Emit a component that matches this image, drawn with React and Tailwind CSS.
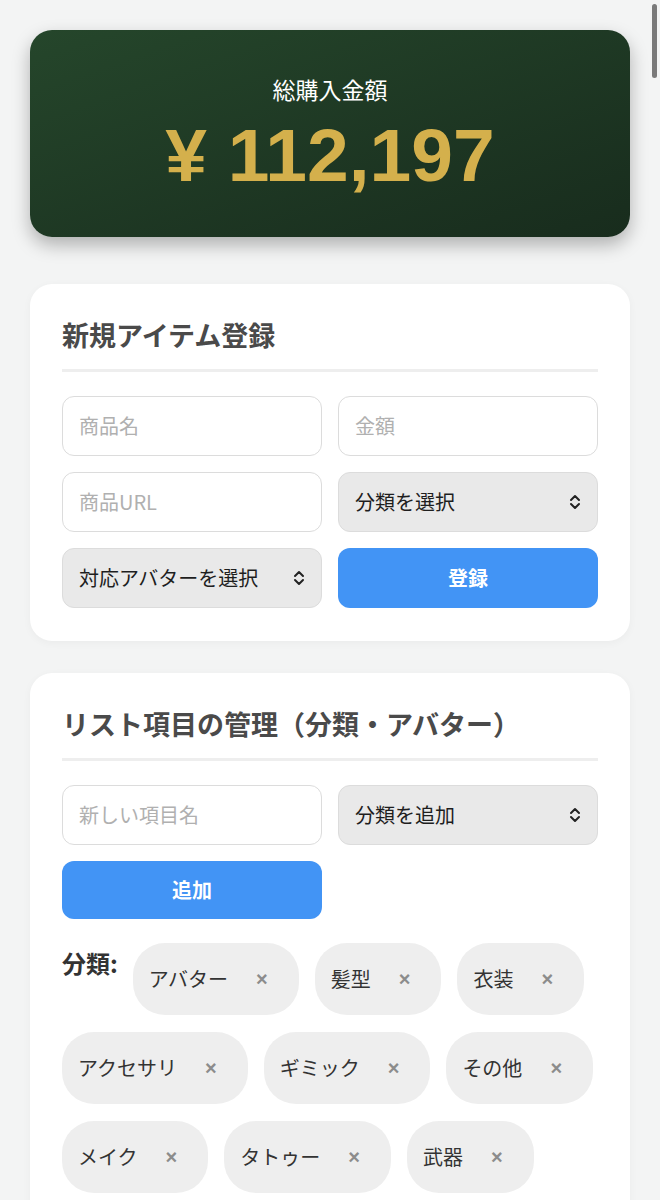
const jp = { fontFamily: '"Noto Sans CJK JP", "Noto Sans", sans-serif' };

const categories = [
  "アバター",
  "髪型",
  "衣装",
  "アクセサリ",
  "ギミック",
  "その他",
  "メイク",
  "タトゥー",
  "武器",
];

function UpDown() {
  return (
    <svg width="12" height="18" viewBox="0 0 12 18" fill="none">
      <path
        d="M2 7l4-4 4 4M2 11l4 4 4-4"
        stroke="#222"
        strokeWidth="2"
        strokeLinecap="round"
        strokeLinejoin="round"
      />
    </svg>
  );
}

function Field({ placeholder }) {
  return (
    <div className="flex h-[60px] items-center rounded-xl border-[1.5px] border-[#dcdcdc] bg-white px-4 text-[20px] text-[#b0b0b0]">
      {placeholder}
    </div>
  );
}

function Select({ label }) {
  return (
    <div className="flex h-[60px] items-center justify-between rounded-xl border-[1.5px] border-[#dcdcdc] bg-[#e9e9e9] pl-4 pr-[16px] text-[20px] text-[#1e1e1e]">
      <span>{label}</span>
      <UpDown />
    </div>
  );
}

function BlueButton({ children, className = "" }) {
  return (
    <button
      type="button"
      className={`flex items-center justify-center rounded-xl bg-[#4294f5] text-[20px] font-bold text-white ${className}`}
    >
      {children}
    </button>
  );
}

function Chip({ name }) {
  return (
    <div className="flex h-[72px] items-center rounded-[32px] bg-[#eeeeee] pl-4 pr-[17px] text-[20px] text-[#333]">
      <span>{name}</span>
      <span
        className="ml-[14px] px-[14px] text-[20px] font-bold leading-none text-[#8c8c8c]"
        style={{ fontFamily: '"Liberation Sans", sans-serif' }}
      >
        ×
      </span>
    </div>
  );
}

function CardTitle({ children }) {
  return (
    <div className="mb-6 border-b-[3px] border-[#eeeeee] pb-4">
      <h2 className="text-[27px] font-bold leading-[37px] text-[#4a4a4a]">
        {children}
      </h2>
    </div>
  );
}

export default function App() {
  return (
    <div
      className="relative min-h-[1200px] bg-[#f3f4f4] px-[30px] pt-[30px]"
      style={jp}
    >
      <div className="absolute right-[3px] top-[4px] h-[74px] w-[5px] rounded-full bg-[#7a7a7a]" />

      <div className="mb-[47px] flex h-[207px] flex-col items-center rounded-[22px] bg-gradient-to-br from-[#25462b] to-[#182c1d] pt-[43px] shadow-[0_8px_18px_rgba(0,0,0,0.28)]">
        <div className="text-[23px] leading-[32px] text-white">総購入金額</div>
        <div
          className="mt-[10px] text-[75px] font-bold leading-[80px] text-[#d4b04c]"
          style={{ fontFamily: '"Liberation Sans", sans-serif' }}
        >
          ¥ 112,197
        </div>
      </div>

      <div className="mb-8 rounded-[22px] bg-white px-8 pb-[33px] pt-8 shadow-[0_2px_8px_rgba(0,0,0,0.04)]">
        <CardTitle>新規アイテム登録</CardTitle>
        <div className="grid grid-cols-2 gap-4">
          <Field placeholder="商品名" />
          <Field placeholder="金額" />
          <Field placeholder="商品URL" />
          <Select label="分類を選択" />
          <Select label="対応アバターを選択" />
          <BlueButton className="h-[60px]">登録</BlueButton>
        </div>
      </div>

      <div className="rounded-[22px] bg-white px-8 pb-8 pt-8 shadow-[0_2px_8px_rgba(0,0,0,0.04)]">
        <CardTitle>リスト項目の管理（分類・アバター）</CardTitle>
        <div className="grid grid-cols-2 gap-4">
          <Field placeholder="新しい項目名" />
          <Select label="分類を追加" />
          <BlueButton className="h-[58px]">追加</BlueButton>
        </div>
        <div className="mt-6 flex flex-wrap items-start gap-x-4 gap-y-[17px]">
          <div className="mr-[-1px] text-[24px] font-bold leading-[40px] text-[#333]">
            分類:
          </div>
          {categories.map((c) => (
            <Chip key={c} name={c} />
          ))}
        </div>
      </div>
    </div>
  );
}
